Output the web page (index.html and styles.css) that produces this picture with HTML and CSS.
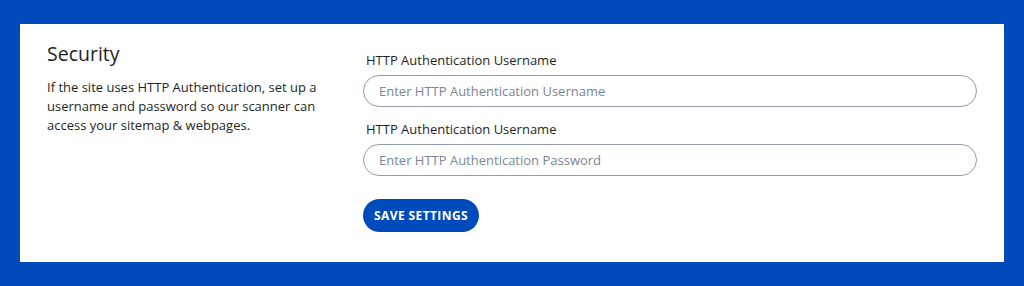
FILE: index.html
```html
<!DOCTYPE html>
<html lang="en">
<head>
<meta charset="utf-8">
<title>Security</title>
<link rel="stylesheet" href="styles.css">
</head>
<body>
<div class="card">
  <div class="intro">
    <h2 class="title">Security</h2>
    <p class="desc">If the site uses HTTP Authentication, set up a username and password so our scanner can access your sitemap &amp; webpages.</p>
  </div>
  <form class="form">
    <div class="field">
      <label class="label" for="u">HTTP Authentication Username</label>
      <input class="input" id="u" type="text" placeholder="Enter HTTP Authentication Username">
    </div>
    <div class="field">
      <label class="label" for="p">HTTP Authentication Username</label>
      <input class="input" id="p" type="password" placeholder="Enter HTTP Authentication Password">
    </div>
    <div class="actions">
      <button class="btn" type="button">Save Settings</button>
    </div>
  </form>
</div>
</body>
</html>
```
FILE: styles.css
```css
* { box-sizing: border-box; }
html, body { margin: 0; }
body {
  background: #004bbb;
  padding: 24px 20px;
  font-family: "Open Sans", "Noto Sans", sans-serif;
  color: #1f1f1f;
}
.card {
  background: #fff;
  height: 238px;
  padding: 16px 27px 30px;
  display: grid;
  grid-template-columns: 300px 1fr;
  column-gap: 16px;
}
.title {
  margin: 0;
  font-size: 19.5px;
  line-height: 28px;
  font-weight: 400;
}
.desc {
  margin: 10px 0 0;
  font-size: 13px;
  line-height: 19px;
}
.form {
  margin: 10px 0 0;
  display: flex;
  flex-direction: column;
}
.field {
  display: flex;
  flex-direction: column;
  margin-bottom: 12px;
}
.label {
  font-size: 13px;
  line-height: 20px;
  margin-bottom: 5px;
  padding-left: 3px;
}
.input {
  height: 32px;
  border: 1.5px solid #939dab;
  border-radius: 16px;
  padding: 0 15px;
  font-family: inherit;
  font-size: 13px;
  color: #1f1f1f;
  background: #fff;
  outline: none;
}
.input::placeholder { color: #7b8593; }
.actions {
  margin-top: 11px;
}
.btn {
  height: 33px;
  padding: 0 11px;
  border: none;
  border-radius: 17px;
  background: #004bbb;
  color: #fff;
  font-family: inherit;
  font-size: 12px;
  font-weight: 700;
  letter-spacing: 0.4px;
  text-transform: uppercase;
}
```
